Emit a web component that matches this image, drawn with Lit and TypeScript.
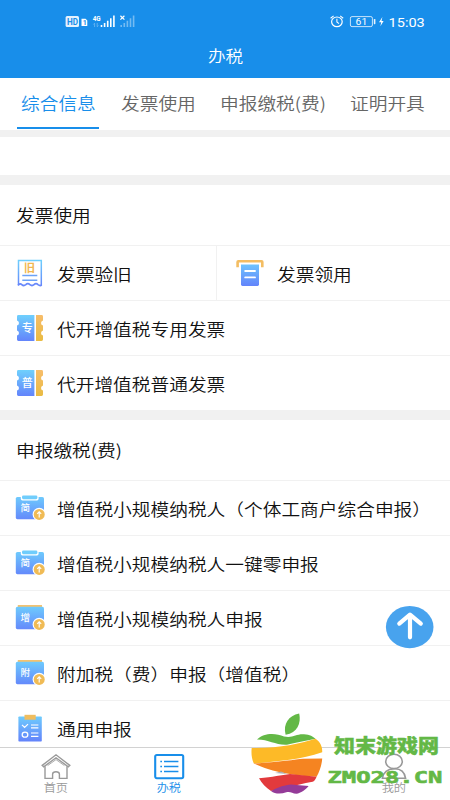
import { LitElement, html, svg, css, nothing } from "lit";
import { customElement, property, state } from "lit/decorators.js";
import { classMap } from "lit/directives/class-map.js";

type Row = { icon: string; glyph?: string; label: string };

const TABS = ["综合信息", "发票使用", "申报缴税(费)", "证明开具"];

const INVOICE_PAIR: Row[] = [
  { icon: "receipt", glyph: "旧", label: "发票验旧" },
  { icon: "printer", label: "发票领用" },
];
const INVOICE_ROWS: Row[] = [
  { icon: "ticket", glyph: "专", label: "代开增值税专用发票" },
  { icon: "ticket", glyph: "普", label: "代开增值税普通发票" },
];
const REPORT_ROWS: Row[] = [
  { icon: "clip", glyph: "简", label: "增值税小规模纳税人（个体工商户综合申报）" },
  { icon: "clip", glyph: "简", label: "增值税小规模纳税人一键零申报" },
  { icon: "folder", glyph: "增", label: "增值税小规模纳税人申报" },
  { icon: "folder", glyph: "附", label: "附加税（费）申报（增值税）" },
  { icon: "checklist", label: "通用申报" },
];

@customElement("row-icon")
export class RowIcon extends LitElement {
  @property() kind = "";
  @property() glyph = "";

  static styles = css`
    :host { display: block; width: 30px; height: 30px; }
    svg { display: block; overflow: visible; }
    text { font-family: "Noto Sans CJK SC", sans-serif; font-weight: 700; text-anchor: middle; }
    text.soft { font-weight: 500; }
  `;

  private badge() {
    return svg`
      <circle cx="24.2" cy="21.4" r="6.6" fill="#fff"/>
      <circle cx="24.2" cy="21.4" r="5.5" fill="#f0bb55"/>
      <path d="M24.2 24.4V19M22.2 20.8L24.2 18.8L26.2 20.8" fill="none" stroke="#fff" stroke-width="1.1"/>`;
  }

  private shape() {
    switch (this.kind) {
      case "receipt":
        return svg`
          <path d="M3.5 27V2.6H26.3V27" fill="none" stroke="url(#g)" stroke-width="1.5"/>
          <path d="M3 27.5Q4.8 24.8 6.8 26.6Q8.7 28.4 10.8 26.6Q12.8 24.8 14.9 26.6Q17 28.4 19 26.6Q21 24.8 23 26.6Q25 28.2 26.8 27" fill="none" stroke="#6888fb" stroke-width="1.7"/>
          <path d="M7.3 17.5H22.3M7.3 22.3H22.3" stroke="#6ba2f8" stroke-width="1.4"/>
          <text x="14.6" y="13.9" font-size="11" fill="#f1b751">${this.glyph}</text>`;
      case "printer":
        return svg`
          <path d="M2.6 9.3V4Q2.6 3.3 3.3 3.3H26.6Q27.3 3.3 27.3 4V9.3" fill="none" stroke="#f3bd62" stroke-width="2.6"/>
          <path d="M6 6.5H24V26.6Q24 28 22.6 28H7.4Q6 28 6 26.6Z" fill="url(#g)"/>
          <path d="M10.2 13H20M10.2 19.4H20" stroke="#fff" stroke-width="1.9" stroke-linecap="round"/>`;
      case "ticket":
        return svg`
          <path d="M3.4 2H19.4V28H3.4Q2 28 2 26.6V22.6A2.7 2.7 0 0 0 2 17.4V12.6A2.7 2.7 0 0 0 2 7.4V3.4Q2 2 3.4 2Z" fill="url(#g)"/>
          <path d="M21 2H26.6Q28 2 28 3.4V7.4A2.7 2.7 0 0 0 28 12.6V17.4A2.7 2.7 0 0 0 28 22.6V26.6Q28 28 26.6 28H21Z" fill="url(#o)"/>
          <text class="soft" x="12.2" y="19" font-size="11" fill="#fff">${this.glyph}</text>`;
      case "clip":
        return svg`
          <rect x=".8" y="4" width="28.2" height="22.2" rx="1.6" fill="url(#g)"/>
          <path d="M5.8 3V5.8Q5.8 7.6 7.4 7.6H22Q23.6 7.6 23.6 5.8V3Z" fill="#fff"/>
          <rect x="7" y="2.5" width="15.4" height="3.7" rx="1.4" fill="#70cdfc"/>
          <text class="soft" x="10.2" y="18" font-size="9.5" fill="#fff">${this.glyph}</text>
          ${this.badge()}`;
      case "folder":
        return svg`
          <path d="M2.8 2H27V4H2.8Z" fill="#f3c270"/>
          <rect x=".8" y="3.8" width="28.2" height="22.4" rx="1.6" fill="url(#g)"/>
          <text class="soft" x="10.2" y="18" font-size="9.5" fill="#fff">${this.glyph}</text>
          ${this.badge()}`;
      case "checklist":
        return svg`
          <rect x="3.4" y="3.4" width="23.4" height="25.2" rx=".8" fill="url(#g)"/>
          <rect x="9.5" y="1.8" width="11.2" height="4.9" fill="#f0bd5e"/>
          <path d="M7 11.8L9.6 14.4L13 11.1M16 12H23.4M16 14.8H23.4M16 20H23.4M16 23.3H23.4" fill="none" stroke="#fff" stroke-width="1.2"/>
          <ellipse cx="10" cy="21.7" rx="2.8" ry="2.5" fill="none" stroke="#fff" stroke-width="1.3"/>`;
      default:
        return nothing;
    }
  }

  render() {
    return html`<svg width="30" height="30" viewBox="0 0 30 30">
      <defs>
        <linearGradient id="g" gradientUnits="userSpaceOnUse" x1="0" y1="2" x2="0" y2="28">
          <stop offset="0" stop-color="#6fd0fd"/><stop offset="1" stop-color="#6384fb"/>
        </linearGradient>
        <linearGradient id="o" x1="0" y1="0" x2="0" y2="1">
          <stop offset="0" stop-color="#f7bd6b"/><stop offset="1" stop-color="#e9bb42"/>
        </linearGradient>
      </defs>${this.shape()}</svg>`;
  }
}

@customElement("app-root")
export class AppRoot extends LitElement {
  @state() private tab = 0;

  static styles = css`
    :host {
      display: flex; flex-direction: column; position: relative;
      width: 450px; height: 800px; overflow: hidden; background: #f1f1f1;
      font-family: "Noto Sans CJK SC", sans-serif; font-size: 16.6px; line-height: 24px;
      color: #111; font-weight: 350;
    }
    .wide { display: inline-block; white-space: nowrap; transform: scaleX(1.127); transform-origin: 0 50%; }
    .wide.mid { transform-origin: 50% 50%; }
    header { flex: none; height: 78px; background: #188eea; color: #fff; }
    .status { display: block; height: 42px; }
    .status text { font-family: Roboto, sans-serif; font-weight: 400; }
    .status .bold { font-weight: 700; }
    .title { text-align: center; font-size: 15.6px; line-height: 26px; padding-left: 1px; }
    .tabs {
      flex: none; height: 51.5px; box-sizing: border-box; background: #fff; color: #666;
      display: grid; grid-template-columns: 100px 99px 130px 100px; padding-left: 21px;
    }
    .tab { display: flex; flex-direction: column; padding-top: 13px; cursor: pointer; }
    .tab.active { color: #188eea; }
    .tab.active::after { content: ""; width: 82px; height: 2px; margin: 12px 0 0 -4px; background: #188eea; }
    .blank { flex: none; height: 38px; margin: 7.5px 0 10px; background: #fff; }
    section { flex: none; background: #fff; margin-bottom: 10px; }
    h2 { margin: 0; padding: 18px 15.5px; font: inherit; height: 24px; }
    .row, .pair { height: 54px; border-top: 1px solid #f1f1f1; }
    .row { display: flex; align-items: center; padding-left: 15px; gap: 11.5px; }
    .row .wide { margin-top: 1px; }
    .pair { display: grid; grid-template-columns: 216px 1fr; }
    .pair .row { border-top: 0; }
    .pair .row + .row { border-left: 1px solid #f1f1f1; padding-left: 18px; }
    nav {
      position: absolute; left: 0; right: 0; bottom: 0; height: 52px; background: #fff;
      border-top: 1px solid #d2d2d2; display: grid; grid-template-columns: repeat(4, 112.5px);
      color: #999; font-size: 10.8px; line-height: 15px;
    }
    .item { display: flex; flex-direction: column; align-items: center; padding-top: 5px; }
    .item svg { height: 27px; flex: none; }
    .item.on { color: #188eea; }
    .last { grid-column: 4; }
    .top { position: absolute; left: 385px; top: 605px; }
    .mark { position: absolute; left: 245px; top: 705px; }
    .mark text { font-family: "Noto Sans CJK SC", sans-serif; font-weight: 900; }
    .mark .latin { font-family: "DejaVu Sans Mono", monospace; font-weight: 700; }
  `;

  private row(r: Row) {
    return html`<div class="row">
      <row-icon .kind=${r.icon} .glyph=${r.glyph ?? ""}></row-icon>
      <span class="wide">${r.label}</span>
    </div>`;
  }

  private status() {
    return html`<svg class="status" width="450" height="42" viewBox="0 0 450 42" fill="#fff">
      <rect x="65.6" y="16" width="13.4" height="11" rx="1.5" fill="#e4f2fd"/>
      <text class="bold" x="67" y="24.8" font-size="8.6" fill="#188eea" textLength="11" lengthAdjust="spacingAndGlyphs">HD</text>
      <path d="M81.5 18.8H85.5L87.3 20.6V26H81.5Z"/>
      <text class="bold" x="82.8" y="25.2" font-size="7" fill="#188eea">1</text>
      <text class="bold" x="92.7" y="21.2" font-size="6.8" textLength="8" lengthAdjust="spacingAndGlyphs">4G</text>
      <path d="M94.6 27V23.4M93.4 24.5L94.6 23.2M97.2 23V26.6M98.4 25.5L97.2 26.8" stroke="#fff" stroke-width=".7" opacity=".45"/>
      <path d="M100.7 25H102.3V27H100.7ZM103.8 23H105.4V27H103.8ZM106.9 20.8H108.5V27H106.9ZM110 18.2H111.6V27H110ZM113.1 15.6H114.7V27H113.1Z"/>
      <path d="M120.4 15.8L124.4 19.6M124.4 15.8L120.4 19.6" stroke="#fff" stroke-width="1.2"/>
      <path opacity=".4" d="M120.4 25H122V27H120.4ZM123.5 23H125.1V27H123.5ZM126.6 20.8H128.2V27H126.6ZM129.7 18.2H131.3V27H129.7ZM132.8 15.6H134.4V27H132.8Z"/>
      <g fill="none" stroke="#fff">
        <ellipse cx="336.9" cy="21.8" rx="5.3" ry="4.8" stroke-width="1.2"/>
        <path d="M336.9 18.8V22L339 23.6M330.6 18.2L333.6 15.9M340.2 15.9L343.2 18.2" stroke-width="1.1"/>
        <rect x="350.4" y="16.6" width="22" height="10" rx="1.6" stroke-width=".9" opacity=".85"/>
      </g>
      <text x="355.6" y="25" font-size="9.2" textLength="11.6" lengthAdjust="spacingAndGlyphs">61</text>
      <rect x="373.8" y="19" width="1.6" height="5.2" rx=".6" opacity=".9"/>
      <path d="M382.4 17L379 22.2H381.2L380.4 26.3L383.6 20.9H381.5Z"/>
      <text x="388.6" y="26.6" font-size="13.4" textLength="36.2" lengthAdjust="spacingAndGlyphs">15:03</text>
    </svg>`;
  }

  render() {
    return html`
      <header>
        ${this.status()}
        <div class="title"><span class="wide mid">办税</span></div>
      </header>
      <div class="tabs">
        ${TABS.map((t, i) => html`<div class=${classMap({ tab: true, active: i === this.tab })}
          @click=${() => (this.tab = i)}><span class="wide">${t}</span></div>`)}
      </div>
      <div class="blank"></div>
      <section>
        <h2><span class="wide">发票使用</span></h2>
        <div class="pair">${INVOICE_PAIR.map((r) => this.row(r))}</div>
        ${INVOICE_ROWS.map((r) => this.row(r))}
      </section>
      <section>
        <h2><span class="wide">申报缴税(费)</span></h2>
        ${REPORT_ROWS.map((r) => this.row(r))}
      </section>
      <svg class="top" width="50" height="44" viewBox="0 0 50 44">
        <ellipse cx="24.7" cy="22.1" rx="23.8" ry="21.1" fill="#48a3ee"/>
        <path d="M25 32.3V10.2M14.3 18.6L25 9.6L35.8 18.6" fill="none" stroke="#fff" stroke-width="4.2" stroke-linecap="round" stroke-linejoin="round"/>
      </svg>
      <nav>
        <div class="item">
          <svg width="32" height="27" viewBox="0 0 32 27" fill="none" stroke="#999" stroke-width="1.4">
            <path d="M2.2 12.4L16 1.8L29.8 12.4L28.3 13.8L16 4.8L3.7 13.8Z"/>
            <path d="M5 13.2V25.4H12.6V21Q12.8 18.8 16 18.8T19.4 21V25.4H27V13.2"/>
            <path d="M7.6 12.6L16 6.6L24.4 12.6" stroke-width=".8"/>
          </svg>
          <span class="wide mid">首页</span>
        </div>
        <div class="item on">
          <svg width="32" height="27" viewBox="0 0 32 27" fill="none" stroke="#188eea">
            <rect x="2.2" y="2" width="28" height="23.2" rx="1.6" stroke-width="2.1"/>
            <path d="M11 8.5H25.4M11 13.5H25.4M11 18.5H25.4" stroke-width="1.5"/>
            <path d="M7.3 8.5H9M7.3 13.5H9M7.3 18.5H9" stroke-width="1.5"/>
          </svg>
          <span class="wide mid">办税</span>
        </div>
        <div class="item last">
          <svg width="32" height="27" viewBox="0 0 32 27" fill="none" stroke="#999" stroke-width="1.6">
            <ellipse cx="16" cy="8.4" rx="8.3" ry="7.2"/>
            <path d="M4.4 25.3Q6 16.2 16 15.8T27.6 25.3Z"/>
          </svg>
          <span class="wide mid">我的</span>
        </div>
      </nav>
      <svg class="mark" width="205" height="95" viewBox="0 0 205 95">
        <path d="M40.6 29.7C37.8 19.5 43.5 10.5 54.2 8.6C56.3 18 52.5 28.2 40.6 29.7Z" fill="#63b846"/>
        <path d="M12 34.6C19 27.5 31 28.2 39 31.5C48 33.5 51 28.7 59 29.3C65 29.7 68 31.6 70.5 34C61 35.5 50 38 42 39.8C31 40.5 24 34.5 12 34.6Z" fill="#63b846"/>
        <path d="M6.7 43C34 43.5 54 39 70.5 33.8C75.5 37 77.5 42 77.2 47.2C56 54.5 34 56.2 8.8 58.5C6.6 53.5 6.1 48 6.7 43Z" fill="#fdba27"/>
        <path d="M8.8 58.5C34 57 51 54.5 58 53.8L77.2 53.6C76.8 60 74.5 66.5 71.6 71.8C55 71.5 26 67.5 8.8 58.5Z" fill="#f58421"/>
        <path d="M30 68L36 66.6L42 69Z" fill="#b0aeb0"/>
        <path d="M14 73.2C28 72 36 69.8 45 68.9L71.6 71.8C70.3 74.5 69.2 76.7 67.6 76.8C49 80.5 36 83.5 26 86C21 82.5 16.5 78 14 73.2Z" fill="#e23a3d"/>
        <path d="M26 86C34 81.5 40 80 46 79.4L63.6 81.1C61.3 84.5 55.5 88.5 51.5 88.8C47 88.5 45.5 86.2 41.3 87.3C36 89.2 30 89.2 26 86Z" fill="#943b98"/>
        <text x="89" y="48" font-size="19" fill="#63b846" stroke="#63b846" stroke-width=".4" textLength="105" lengthAdjust="spacingAndGlyphs">知末游戏网</text>
        <text class="latin" x="82.5" y="77.8" font-size="16.6" fill="#63b846" stroke="#63b846" stroke-width=".6" textLength="115" lengthAdjust="spacingAndGlyphs">ZMO28.CN</text>
      </svg>
    `;
  }
}
